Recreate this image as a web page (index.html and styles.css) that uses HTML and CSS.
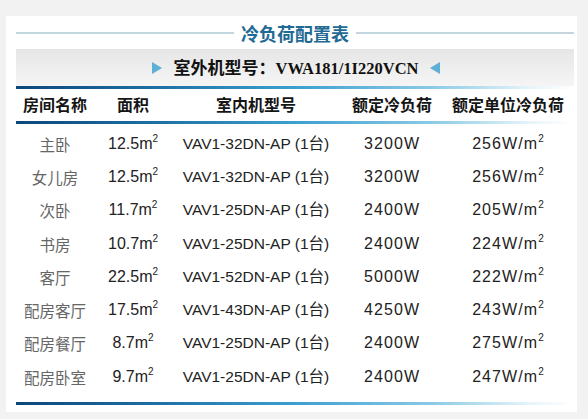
FILE: index.html
```html
<!DOCTYPE html>
<html lang="zh">
<head>
<meta charset="utf-8">
<link rel="stylesheet" href="styles.css">
</head>
<body>
<div class="card">
  <div class="title-row">
    <span class="rule"></span>
    <h1 class="title">冷负荷配置表</h1>
    <span class="rule"></span>
  </div>
  <div class="band">
    <svg class="tri" width="10" height="12" viewBox="0 0 10 12"><polygon points="0,0 10,6 0,12" fill="#5db0d4"/></svg>
    <span class="band-text"><span class="cjk">室外机型号：</span>VWA181/1I220VCN</span>
    <svg class="tri" width="10" height="12" viewBox="0 0 10 12"><polygon points="10,0 0,6 10,12" fill="#5db0d4"/></svg>
  </div>
  <div class="gline"></div>
  <div class="head grid">
    <span>房间名称</span>
    <span>面积</span>
    <span>室内机型号</span>
    <span>额定冷负荷</span>
    <span>额定单位冷负荷</span>
  </div>
  <div class="gline"></div>
  <div class="rows">
    <div class="row grid"><span class="room">主卧</span><span class="area">12.5m<sup>2</sup></span><span class="model">VAV1-32DN-AP (1台)</span><span class="num">3200W</span><span class="num">256W/m<sup>2</sup></span></div>
    <div class="row grid"><span class="room">女儿房</span><span class="area">12.5m<sup>2</sup></span><span class="model">VAV1-32DN-AP (1台)</span><span class="num">3200W</span><span class="num">256W/m<sup>2</sup></span></div>
    <div class="row grid"><span class="room">次卧</span><span class="area">11.7m<sup>2</sup></span><span class="model">VAV1-25DN-AP (1台)</span><span class="num">2400W</span><span class="num">205W/m<sup>2</sup></span></div>
    <div class="row grid"><span class="room">书房</span><span class="area">10.7m<sup>2</sup></span><span class="model">VAV1-25DN-AP (1台)</span><span class="num">2400W</span><span class="num">224W/m<sup>2</sup></span></div>
    <div class="row grid"><span class="room">客厅</span><span class="area">22.5m<sup>2</sup></span><span class="model">VAV1-52DN-AP (1台)</span><span class="num">5000W</span><span class="num">222W/m<sup>2</sup></span></div>
    <div class="row grid"><span class="room">配房客厅</span><span class="area">17.5m<sup>2</sup></span><span class="model">VAV1-43DN-AP (1台)</span><span class="num">4250W</span><span class="num">243W/m<sup>2</sup></span></div>
    <div class="row grid"><span class="room">配房餐厅</span><span class="area">8.7m<sup>2</sup></span><span class="model">VAV1-25DN-AP (1台)</span><span class="num">2400W</span><span class="num">275W/m<sup>2</sup></span></div>
    <div class="row grid"><span class="room">配房卧室</span><span class="area">9.7m<sup>2</sup></span><span class="model">VAV1-25DN-AP (1台)</span><span class="num">2400W</span><span class="num">247W/m<sup>2</sup></span></div>
  </div>
  <div class="gline"></div>
</div>
</body>
</html>
```

FILE: styles.css
```css
html, body {
  margin: 0;
  padding: 0;
}
body {
  background: #f2f2f3;
  width: 588px;
  height: 419px;
  overflow: hidden;
  font-family: "Liberation Sans", "Noto Sans CJK SC", sans-serif;
}
.card {
  margin: 16px 11px 0 6px;
  padding: 0 3px 7px 10px;
  background: #fff;
  display: flex;
  flex-direction: column;
}
.title-row {
  height: 33px;
  display: flex;
  align-items: center;
  gap: 7px;
}
.rule {
  flex: 1;
  height: 2px;
  background: #c3d5df;
}
.title {
  margin: 0;
  font-family: "Noto Sans CJK SC", sans-serif;
  font-weight: 700;
  font-size: 18px;
  line-height: 20px;
  color: #1f6b95;
}
.band {
  height: 37px;
  background: linear-gradient(to bottom, #e6e6e7, #f5f5f5);
  display: flex;
  align-items: center;
  justify-content: center;
  gap: 11px;
  padding-left: 2px;
}
.tri {
  display: block;
}
.band-text {
  font-family: "Liberation Serif", "Noto Sans CJK SC", serif;
  font-weight: 700;
  font-size: 16.5px;
  line-height: 20px;
  color: #111;
  padding-top: 1px;
}
.band-text .cjk {
  font-family: "Noto Sans CJK SC", sans-serif;
  font-weight: 700;
  font-size: 17px;
}
.gline {
  height: 3px;
  background: linear-gradient(to right, #0d477a 0%, #1d6fa5 25%, #3c9fd0 50%, #8ccbe6 75%, #e6f3f9 92%, #ffffff 100%);
}
.grid {
  display: grid;
  grid-template-columns: 78px 78px 168px 104px 128px;
  align-items: center;
  justify-items: center;
  white-space: nowrap;
}
.head {
  height: 32px;
  font-family: "Noto Sans CJK SC", sans-serif;
  font-weight: 700;
  font-size: 16px;
  line-height: 20px;
  color: #151515;
  padding-bottom: 3px;
  box-sizing: border-box;
}
.rows {
  padding: 3px 0 9px;
}
.row {
  height: 33.3px;
  font-size: 16px;
  line-height: 20px;
  color: #222;
}
.room {
  font-family: "Noto Sans CJK SC", sans-serif;
  font-weight: 400;
  color: #666;
  font-size: 15.5px;
}
.area {
  font-size: 16px;
}
.model {
  font-size: 15.5px;
}
.model, .area, .num {
  font-family: "Liberation Sans", "Noto Sans CJK SC", sans-serif;
}
.num {
  letter-spacing: 1.1px;
}
sup {
  font-size: 10px;
  line-height: 0;
  vertical-align: 7px;
  letter-spacing: 0;
}
```
